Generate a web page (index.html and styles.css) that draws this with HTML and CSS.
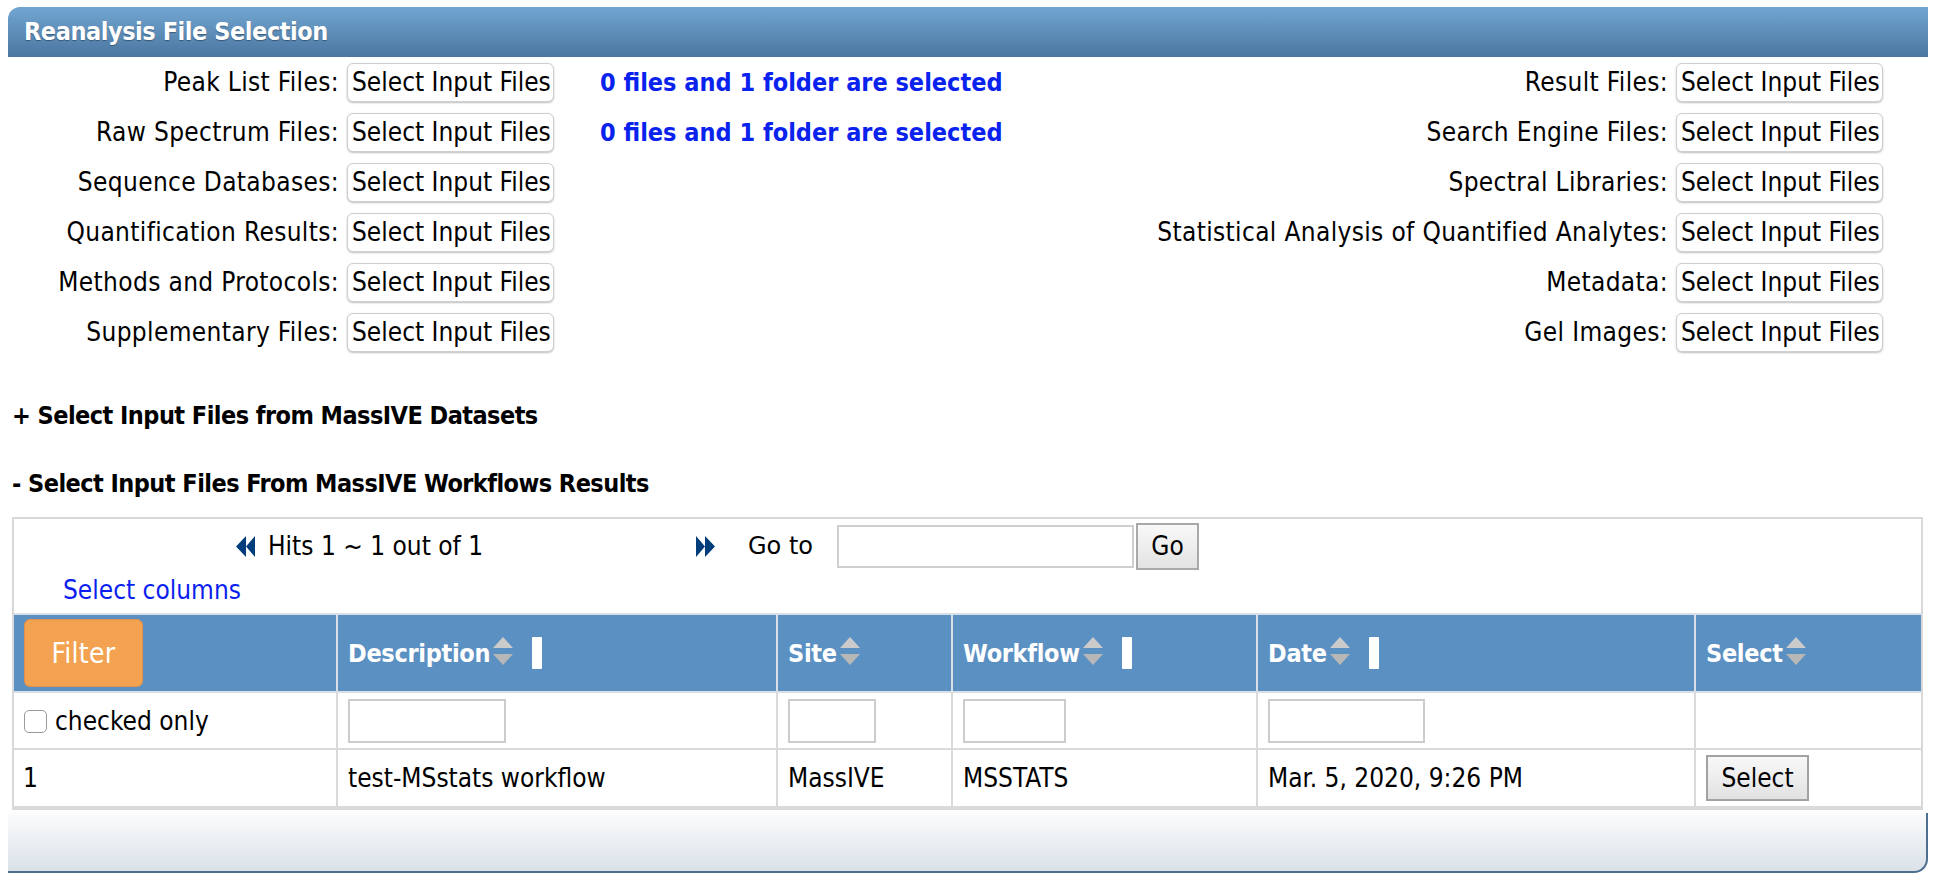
FILE: index.html
```html
<!DOCTYPE html>
<html>
<head>
<meta charset="utf-8">
<title>Reanalysis File Selection</title>
<link rel="stylesheet" href="styles.css">
</head>
<body>
<div class="panel">
  <div class="panel-head">Reanalysis File Selection</div>

  <div class="file-grid">
    <div class="lbl">Peak List Files:</div>
    <button class="pick">Select Input Files</button>
    <div class="status">0 files and 1 folder are selected</div>
    <div class="lbl">Result Files:</div>
    <button class="pick">Select Input Files</button>

    <div class="lbl">Raw Spectrum Files:</div>
    <button class="pick">Select Input Files</button>
    <div class="status">0 files and 1 folder are selected</div>
    <div class="lbl">Search Engine Files:</div>
    <button class="pick">Select Input Files</button>

    <div class="lbl">Sequence Databases:</div>
    <button class="pick">Select Input Files</button>
    <div class="status"></div>
    <div class="lbl">Spectral Libraries:</div>
    <button class="pick">Select Input Files</button>

    <div class="lbl">Quantification Results:</div>
    <button class="pick">Select Input Files</button>
    <div class="status"></div>
    <div class="lbl">Statistical Analysis of Quantified Analytes:</div>
    <button class="pick">Select Input Files</button>

    <div class="lbl">Methods and Protocols:</div>
    <button class="pick">Select Input Files</button>
    <div class="status"></div>
    <div class="lbl">Metadata:</div>
    <button class="pick">Select Input Files</button>

    <div class="lbl">Supplementary Files:</div>
    <button class="pick">Select Input Files</button>
    <div class="status"></div>
    <div class="lbl">Gel Images:</div>
    <button class="pick">Select Input Files</button>
  </div>

  <div class="section-title sec-datasets">+ Select Input Files from MassIVE Datasets</div>
  <div class="section-title sec-workflows">- Select Input Files From MassIVE Workflows Results</div>

  <div class="results">
    <div class="pager">
      <svg class="nav-ico" width="21" height="21" viewBox="0 0 21 21"><polygon points="20,0 11,10.5 20,21" fill="#003d7a"/><polygon points="11,0 1,10.5 11,21" fill="#003d7a"/></svg>
      <span class="hits">Hits 1 ~ 1 out of 1</span>
      <svg class="nav-ico" width="21" height="21" viewBox="0 0 21 21"><polygon points="1,0 10,10.5 1,21" fill="#003d7a"/><polygon points="10,0 20,10.5 10,21" fill="#003d7a"/></svg>
      <span class="goto">Go to</span>
      <input class="goto-input" type="text">
      <button class="go-btn">Go</button>
    </div>
    <div class="select-cols">Select columns</div>

    <table class="grid">
      <colgroup>
        <col class="c-num"><col class="c-desc"><col class="c-site"><col class="c-wf"><col class="c-date"><col class="c-sel">
      </colgroup>
      <thead>
        <tr>
          <th class="th-filter"><button class="filter-btn">Filter</button></th>
          <th><span class="th-in">Description<svg class="sort" width="20" height="28" viewBox="0 0 20 28"><polygon points="0,11 10,0 20,11" fill="#cbcbcb"/><polygon points="0,17 20,17 10,28" fill="#b7b7b7"/></svg><span class="grip"></span></span></th>
          <th><span class="th-in">Site<svg class="sort" width="20" height="28" viewBox="0 0 20 28"><polygon points="0,11 10,0 20,11" fill="#cbcbcb"/><polygon points="0,17 20,17 10,28" fill="#b7b7b7"/></svg></span></th>
          <th><span class="th-in">Workflow<svg class="sort" width="20" height="28" viewBox="0 0 20 28"><polygon points="0,11 10,0 20,11" fill="#cbcbcb"/><polygon points="0,17 20,17 10,28" fill="#b7b7b7"/></svg><span class="grip"></span></span></th>
          <th><span class="th-in">Date<svg class="sort" width="20" height="28" viewBox="0 0 20 28"><polygon points="0,11 10,0 20,11" fill="#cbcbcb"/><polygon points="0,17 20,17 10,28" fill="#b7b7b7"/></svg><span class="grip"></span></span></th>
          <th><span class="th-in">Select<svg class="sort" width="20" height="28" viewBox="0 0 20 28"><polygon points="0,11 10,0 20,11" fill="#cbcbcb"/><polygon points="0,17 20,17 10,28" fill="#b7b7b7"/></svg></span></th>
        </tr>
      </thead>
      <tbody>
        <tr class="filter-row">
          <td><label class="chk"><input type="checkbox" class="chk-box">checked only</label></td>
          <td><input type="text" class="flt flt-desc"></td>
          <td><input type="text" class="flt flt-site"></td>
          <td><input type="text" class="flt flt-wf"></td>
          <td><input type="text" class="flt flt-date"></td>
          <td></td>
        </tr>
        <tr class="data-row">
          <td>1</td>
          <td>test-MSstats workflow</td>
          <td>MassIVE</td>
          <td>MSSTATS</td>
          <td>Mar. 5, 2020, 9:26 PM</td>
          <td><button class="sel-btn">Select</button></td>
        </tr>
      </tbody>
    </table>
  </div>

  <div class="panel-foot"></div>
</div>
</body>
</html>
```

FILE: styles.css
```css
* { box-sizing: border-box; }

body {
  margin: 7px 8px 0;
  font-family: "DejaVu Sans Condensed", "Liberation Sans", sans-serif;
  font-size: 26px;
  color: #000;
  background: #fff;
}

button, input { font-family: inherit; font-size: 26px; color: #000; }

.panel-head {
  height: 50px;
  line-height: 50px;
  padding-left: 16px;
  background: linear-gradient(#72a6d2, #4a76a0);
  border-top-left-radius: 12px;
  color: #fff;
  font-weight: bold;
  font-size: 25px;
  letter-spacing: -0.45px;
  text-shadow: 0 1px 1px rgba(0,0,0,0.35);
}

.file-grid {
  display: grid;
  grid-template-columns: 339px 207px 1fr auto 207px;
  grid-auto-rows: 50px;
  align-items: center;
  padding-right: 45px;
}

.lbl {
  text-align: right;
  padding-right: 8px;
  white-space: nowrap;
  letter-spacing: 0.35px;
}

.pick {
  width: 207px;
  height: 39px;
  padding: 0 4px;
  background: #fff;
  border: 1px solid #cfcfcf;
  border-radius: 6px;
  box-shadow: 0 1px 2px rgba(0,0,0,0.25);
  text-align: left;
  white-space: nowrap;
}

.status {
  padding-left: 46px;
  color: #0a22ee;
  font-weight: bold;
  font-size: 25px;
  white-space: nowrap;
}

.section-title {
  font-weight: bold;
  font-size: 25px;
  letter-spacing: -0.55px;
  line-height: 32px;
  padding-left: 4px;
}
.sec-datasets { margin-top: 43px; }
.sec-workflows { margin-top: 36px; }

.results {
  margin: 17px 5px 0 4px;
  border: 2px solid #d9d9d9;
}

.pager {
  display: flex;
  align-items: center;
  height: 54px;
  padding-left: 221px;
}
.nav-ico { flex: none; }
.hits { width: 439px; padding-left: 12px; }
.goto {
  width: 121px;
  padding-left: 32px;
  font-family: "DejaVu Sans", "Liberation Sans", sans-serif;
  font-size: 24px;
}
.goto-input {
  width: 297px;
  height: 43px;
  border: 2px solid #cfcfcf;
  padding: 0 6px;
}
.go-btn {
  width: 63px;
  height: 47px;
  margin-left: 2px;
  border: 2px solid #a9a9a9;
  background: linear-gradient(#f8f8f8, #e3e3e3);
  padding: 0;
}

.select-cols {
  color: #0a1ef0;
  line-height: 30px;
  padding: 2px 0 8px 49px;
}

.grid {
  width: 100%;
  table-layout: fixed;
  border-collapse: collapse;
}
.c-num { width: 323px; }
.c-desc { width: 440px; }
.c-site { width: 175px; }
.c-wf { width: 305px; }
.c-date { width: 438px; }
.c-sel { width: 226px; }

.grid th {
  height: 78px;
  background: #5b90c2;
  color: #fff;
  font-weight: bold;
  font-size: 25px;
  letter-spacing: -0.3px;
  text-align: left;
  padding: 0 0 0 10px;
  border: 2px solid #d8dfe6;
  vertical-align: middle;
  white-space: nowrap;
}
.grid th:first-child, .grid td:first-child { border-left: none; }
.grid th:last-child, .grid td:last-child { border-right: none; }

.th-in { display: inline-flex; align-items: center; }
.sort { margin-left: 3px; margin-top: -4px; }
.grip {
  width: 10px;
  height: 32px;
  margin-left: 19px;
  background: #fff;
  border-radius: 1px;
}

.grid th.th-filter { padding: 0 0 0 10px; }
.filter-btn {
  width: 119px;
  height: 68px;
  background: #f2a250;
  border: 1px solid #e0904a;
  border-radius: 6px;
  color: #fff;
  font-size: 28px;
  letter-spacing: 0.3px;
  padding: 0;
}

.grid td {
  border: 2px solid #dadada;
  padding: 0 0 0 10px;
  white-space: nowrap;
  vertical-align: middle;
}
.filter-row td { height: 57px; }
.data-row td { height: 58px; }
.data-row td:first-child { padding-left: 9px; }

.chk { display: inline-flex; align-items: center; margin-top: 4px; }
.chk-box {
  appearance: none;
  -webkit-appearance: none;
  width: 23px;
  height: 23px;
  margin: 0 8px 0 0;
  border: 1.5px solid #9a9a9a;
  border-radius: 5px;
  background: #fff;
}

.flt {
  height: 44px;
  border: 2px solid #cccccc;
  padding: 0 4px;
  display: block;
}
.flt-desc { width: 158px; }
.flt-site { width: 88px; }
.flt-wf { width: 103px; }
.flt-date { width: 157px; }

.sel-btn {
  width: 103px;
  height: 46px;
  border: 2px solid #a2a2a2;
  background: linear-gradient(#f8f8f8, #e2e2e2);
  padding: 0;
}

.panel-foot {
  margin-top: 3px;
  height: 60px;
  background: linear-gradient(#fbfcfd, #dae1e8);
  border-right: 2px solid #4f6f8f;
  border-bottom: 2px solid #4f6f8f;
  border-bottom-right-radius: 14px;
}
```
